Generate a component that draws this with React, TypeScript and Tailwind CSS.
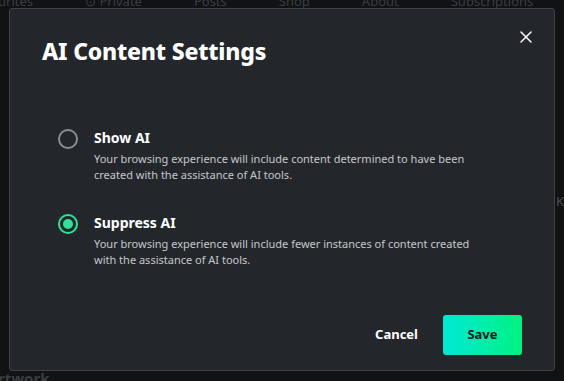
import { X } from "lucide-react"

const font = { fontFamily: '"Noto Sans", "Open Sans", sans-serif' }

function Radio({ checked }: { checked: boolean }) {
  return checked ? (
    <div className="w-[20px] h-[20px] rounded-full border-2 border-[#2ee29a] flex items-center justify-center shrink-0">
      <div className="w-[10px] h-[10px] rounded-full bg-[#2ee29a]" />
    </div>
  ) : (
    <div className="w-[20px] h-[20px] rounded-full border-2 border-[#8a8e92] shrink-0" />
  )
}

export default function App() {
  const options = [
    {
      title: "Show AI",
      description:
        "Your browsing experience will include content determined to have been created with the assistance of AI tools.",
      checked: false,
    },
    {
      title: "Suppress AI",
      description:
        "Your browsing experience will include fewer instances of content created with the assistance of AI tools.",
      checked: true,
    },
  ]

  return (
    <div className="relative w-[564px] h-[381px] overflow-hidden bg-[#101214]" style={font}>
      {/* page behind the dialog */}
      <div className="flex items-center h-[10px] text-[13px] text-[#3a3e42] -mt-[3px] gap-[52px] -ml-[2px] whitespace-nowrap">
        <span>urites</span>
        <span>⊙ Private</span>
        <span>Posts</span>
        <span>Shop</span>
        <span>About</span>
        <span>Subscriptions</span>
      </div>
      <div className="absolute left-[-2px] top-[367px] text-[15px] font-bold text-[#3a3e42]">rtwork</div>
      <div className="absolute left-[556px] top-[192px] text-[13px] text-[#4a4e52]">K</div>

      {/* dialog */}
      <div className="absolute left-[9px] top-[8px] w-[546px] h-[363px] rounded-[3px] border border-[#3d4247] bg-[#23272b] flex flex-col">
        <div className="flex items-start justify-between pl-[32px] pr-[18px] pt-[27px]">
          <h2 className="text-[23px] font-extrabold text-white leading-[30px] tracking-[-0.2px]">AI Content Settings</h2>
          <button className="text-white mt-[-9px]">
            <X size={20} strokeWidth={1.75} />
          </button>
        </div>

        <div className="flex flex-col gap-[30px] pl-[48px] pr-[32px] mt-[62px]">
          {options.map((opt) => (
            <div key={opt.title} className="flex items-start gap-[16px]">
              <div className="pt-[1px]">
                <Radio checked={opt.checked} />
              </div>
              <div className="flex flex-col">
                <div className="text-[14px] font-bold text-white leading-[20px]">{opt.title}</div>
                <p className="text-[11px] text-[#c3c7cb] leading-[16px] mt-[3px] w-[382px]">{opt.description}</p>
              </div>
            </div>
          ))}
        </div>

        <div className="mt-auto flex items-center justify-end gap-[25px] pr-[32px] pb-[15px]">
          <button className="text-[13px] font-bold text-white">Cancel</button>
          <button className="w-[79px] h-[40px] rounded-[3px] bg-gradient-to-r from-[#00e8d4] to-[#00f27e] text-[13px] font-bold text-[#15191c]">
            Save
          </button>
        </div>
      </div>
    </div>
  )
}
